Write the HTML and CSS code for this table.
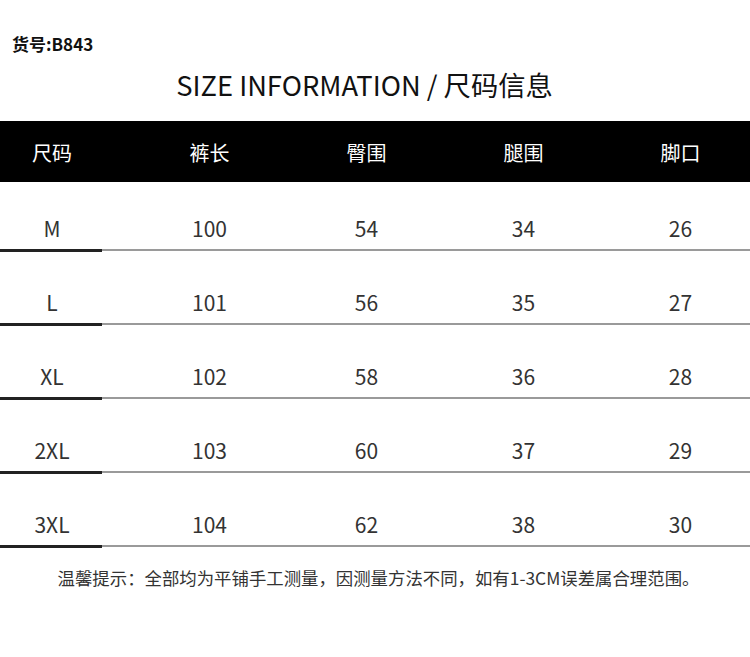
FILE: index.html
```html
<!DOCTYPE html>
<html lang="zh">
<head>
<meta charset="utf-8">
<link rel="stylesheet" href="styles.css">
</head>
<body>
<div class="sku">货号:B843</div>
<h1 class="title">SIZE INFORMATION / 尺码信息</h1>
<div class="head grid">
  <div class="c">尺码</div><div class="c">裤长</div><div class="c">臀围</div><div class="c">腿围</div><div class="c">脚口</div>
</div>
<div class="body">
  <div class="row">
    <div class="grid cells"><div class="c">M</div><div class="c">100</div><div class="c">54</div><div class="c">34</div><div class="c">26</div></div>
    <div class="rule"><span class="dark"></span><span class="grey"></span></div>
  </div>
  <div class="row">
    <div class="grid cells"><div class="c">L</div><div class="c">101</div><div class="c">56</div><div class="c">35</div><div class="c">27</div></div>
    <div class="rule"><span class="dark"></span><span class="grey"></span></div>
  </div>
  <div class="row">
    <div class="grid cells"><div class="c">XL</div><div class="c">102</div><div class="c">58</div><div class="c">36</div><div class="c">28</div></div>
    <div class="rule"><span class="dark"></span><span class="grey"></span></div>
  </div>
  <div class="row">
    <div class="grid cells"><div class="c">2XL</div><div class="c">103</div><div class="c">60</div><div class="c">37</div><div class="c">29</div></div>
    <div class="rule"><span class="dark"></span><span class="grey"></span></div>
  </div>
  <div class="row">
    <div class="grid cells"><div class="c">3XL</div><div class="c">104</div><div class="c">62</div><div class="c">38</div><div class="c">30</div></div>
    <div class="rule"><span class="dark"></span><span class="grey"></span></div>
  </div>
</div>
<p class="note">温馨提示：全部均为平铺手工测量，因测量方法不同，如有1-3CM误差属合理范围。</p>
</body>
</html>
```
FILE: styles.css
```css
html, body {
  margin: 0;
  padding: 0;
  background: #fff;
}
body {
  font-family: "Noto Sans CJK SC", "Noto Sans", sans-serif;
  color: #333;
  width: 750px;
  overflow: hidden;
}
.sku {
  padding: 33px 0 0 12px;
  font-size: 17px;
  line-height: 22px;
  font-weight: 700;
  color: #111;
}
.title {
  margin: 9px 0 0;
  padding-right: 21px;
  text-align: center;
  font-size: 27.3px;
  line-height: 40px;
  font-weight: 400;
  color: #111;
}
.grid {
  display: grid;
  grid-template-columns: 131px 157px 157px 157px 148px;
}
.c {
  text-align: center;
}
.c:first-child {
  padding-right: 27px;
}
.c:last-child {
  padding-left: 9px;
}
.head {
  margin-top: 17px;
  background: #000;
  color: #fff;
  height: 61px;
  box-sizing: border-box;
  padding: 20px 0 17px;
  font-size: 20px;
  line-height: 24px;
}
.cells {
  padding: 38px 0 9px;
  font-size: 21px;
  line-height: 24px;
  color: #333;
}
.row:first-child .cells {
  padding-top: 34px;
}
.rule {
  display: flex;
  align-items: flex-start;
  height: 3px;
}
.dark {
  width: 102px;
  height: 3px;
  background: #222;
}
.grey {
  flex: 1;
  height: 2px;
  background: #9a9a9a;
}
.note {
  margin: 19px 0 0;
  padding-left: 7px;
  text-align: center;
  font-size: 17.4px;
  line-height: 22px;
  color: #333;
}
```
